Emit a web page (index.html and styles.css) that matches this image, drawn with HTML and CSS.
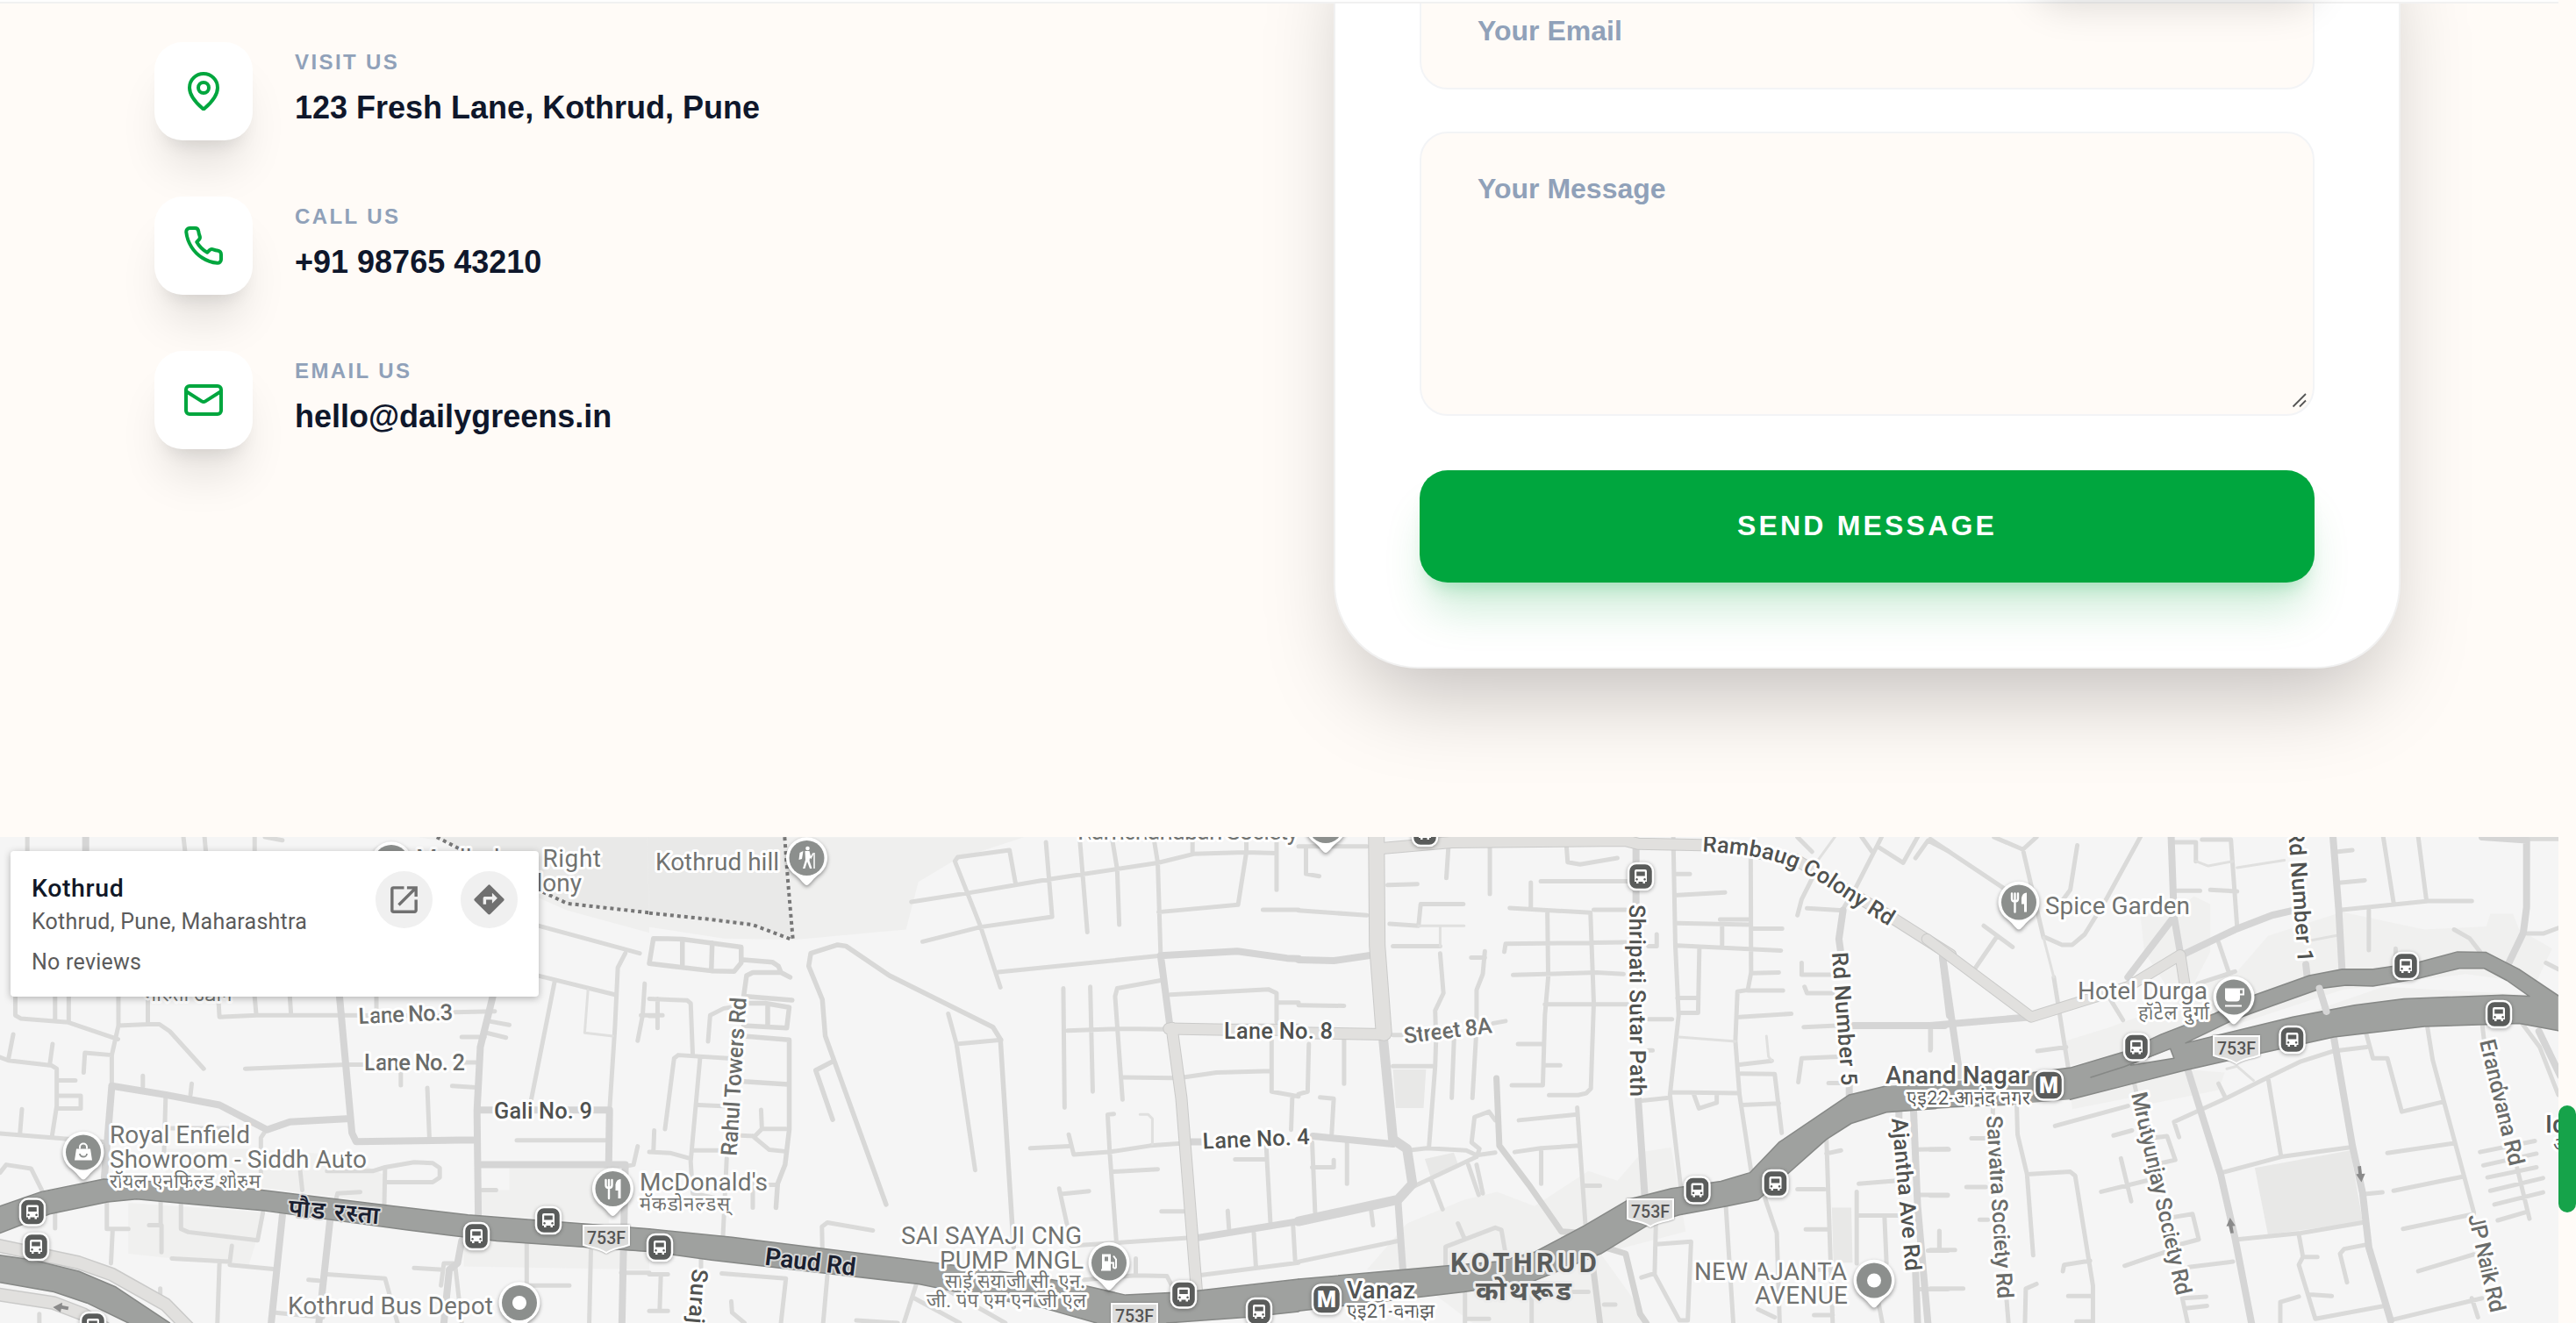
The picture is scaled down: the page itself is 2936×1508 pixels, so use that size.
FILE: index.html
```html
<!DOCTYPE html>
<html lang="en">
<head>
<meta charset="utf-8">
<title>Daily Greens – Contact</title>
<link rel="stylesheet" href="styles.css">
</head>
<body>
<div class="page">
<header class="topbar"><span class="topbar-cta"></span></header>
<div class="scrollthumb"></div>

<section class="contact">
  <ul class="info">
    <li class="info-item">
      <span class="info-icon"><svg viewBox="0 0 24 24"><path d="M20 10c0 4.993-5.539 10.193-7.399 11.799a1 1 0 0 1-1.202 0C9.539 20.193 4 14.993 4 10a8 8 0 0 1 16 0"/><circle cx="12" cy="10" r="3"/></svg></span>
      <div class="info-text"><p class="info-label">VISIT US</p><p class="info-value">123 Fresh Lane, Kothrud, Pune</p></div>
    </li>
    <li class="info-item">
      <span class="info-icon"><svg viewBox="0 0 24 24"><path d="M22 16.92v3a2 2 0 0 1-2.18 2 19.79 19.79 0 0 1-8.63-3.07 19.5 19.5 0 0 1-6-6 19.79 19.79 0 0 1-3.07-8.67A2 2 0 0 1 4.11 2h3a2 2 0 0 1 2 1.72 12.84 12.84 0 0 0 .7 2.81 2 2 0 0 1-.45 2.11L8.09 9.91a16 16 0 0 0 6 6l1.27-1.27a2 2 0 0 1 2.11-.45 12.84 12.84 0 0 0 2.81.7A2 2 0 0 1 22 16.92z"/></svg></span>
      <div class="info-text"><p class="info-label">CALL US</p><p class="info-value">+91 98765 43210</p></div>
    </li>
    <li class="info-item">
      <span class="info-icon"><svg viewBox="0 0 24 24"><rect x="2" y="4" width="20" height="16" rx="2"/><path d="m22 7-8.97 5.7a1.94 1.94 0 0 1-2.06 0L2 7"/></svg></span>
      <div class="info-text"><p class="info-label">EMAIL US</p><p class="info-value">hello@dailygreens.in</p></div>
    </li>
  </ul>
  <form class="card">
    <label class="field">Your Email</label>
    <label class="field field-area">Your Message<svg class="grip" viewBox="0 0 18 18"><path d="M1.5 16.5 16 2M9 16.5l7-7"/></svg></label>
    <button class="send" type="button">SEND MESSAGE</button>
  </form>
</section>

<section class="map">
<svg class="map-canvas" viewBox="0 954 2916 554">
<defs>
  <g id="bus"><rect class="badge" x="-14" y="-15" width="28" height="30" rx="9"/><path fill="#fff" fill-rule="evenodd" d="M-5-8H5q2 0 2 2V6H5V8H2.500V6H-2.500V8H-5V6H-7V-6q0-2 2-2zM-4.800-5.500V-.5H4.800V-5.500zM-4.500 2a1.300 1.300 0 1 0 .1 0zM4.500 2a1.300 1.300 0 1 0 .1 0z"/></g>
  <g id="metro"><rect class="badge" x="-16" y="-16.500" width="32" height="33" rx="10"/><text class="metro-m" x="0" y="9">M</text></g>
  <g id="pin"><path class="pin-edge" d="M0 31C-3 31-6 25-12 20A23.500 23.500 0 1 1 12 20C6 25 3 31 0 31z"/><circle class="pin-fill" r="20"/></g>
  <g id="dot"><use href="#pin"/><circle r="8" fill="#fff"/></g>
  <g id="food"><use href="#pin"/><path fill="none" stroke="#fff" stroke-width="2.400" stroke-linecap="round" d="M-8-10v6q0 3 3.500 3t3.500-3v-6M-4.500-10V11"/><path fill="#fff" d="M3 2V-5q1-6 6-6V11H6V2z"/></g>
  <g id="shield"><path class="shield" d="M-26-14H26V8L20 10Q8 12 0 17-8 12-20 10L-26 8z"/><text class="shield-no" x="0" y="7">753F</text></g>
</defs>

<!-- western quarter -->
<g transform="translate(0 940) scale(.47194 .36224)">
  <path class="park" d="M1010 39H1568V340L1370 270 1300 230V100z"/>
  <path class="park2" d="M1055 39 1130 90 1300 205 1370 248 1568 275V39z"/>
  <path class="urban" d="M400 1020H600L830 1040 925 1100V1190L620 1140 400 1110zM1230 1080H1470V1255L1160 1225 1150 1150H1230zM310 1190 640 1220 600 1390 310 1350zM1120 1310H1568V1400L1120 1390z"/>
  <path class="r5" d="M66 39V85M443 39l4 45M494 39l3 45M615 39V85M640 39l42 10M37 541V600L50 610 165 622 285 675M133 541V615M166 541V622M286 541V632L270 725V820M286 632 357 628H385L410 650 492 768M357 541V628M527 541 530 605 620 600H820M615 541 619 600M700 541 703 600M820 600 1060 601M1098 590 1195 587M909 541V580M32 660 20 740M0 732 20 742 125 758 137 768V885L125 985M127 690 120 757M202 780 205 718 270 725M137 805H182M137 853H195V893H137M345 790V825M463 815 460 850M53 895 48 975M0 972 250 998M0 1095 15 1070 75 1082 103 1155M592 768 835 755H880M1120 748H1150M968 780V820M1032 828 1037 985M1092 822 1150 827M1115 668H1170M1180 618 1230 630M1175 655 1222 670M1248 993H1465M400 860 395 1080M643 960 630 985V1100M400 955H560M790 1090H900L930 1078 1000 1062 1045 1065 1062 1080V1110L1045 1125H930M930 1078 928 1200M808 1200 815 1160 870 1156M725 1090 730 1150M1165 1150H1198M133 1220V1270M258 1190V1272H310M272 1275 268 1380M388 1185V1260H360M390 1260V1345M437 1190V1272L455 1282 622 1308 635 1220M415 1365 555 1375 560 1325M555 1385 660 1398M530 1380 525 1568M745 1432 770 1435M790 1415 930 1428 960 1568M1000 1395 1070 1400M1065 1450 1072 1380H1095M1100 1395 1115 1568M1272 1310V1450H1375M1427 1340 1423 1568M1500 1410H1568M95 1540V1568M387 1460V1490M660 1535 780 1550M1300 318 1545 405M1300 475 1485 535M1510 405 1492 450 1485 640 1472 900M1340 490 1283 865M1557 500 1552 600 1540 680M1548 600H1600M1540 1012 1530 1070 1510 1075"/>
  <path class="r3" d="M1420 520 1412 655 1480 665"/>
  <path class="r8" d="M207 39V85M270 822 400 850 530 882 645 960 700 935 845 925M270 822 252 1110M820 541 850 970 860 997 1145 992M1190 541 1160 700 1152 900 1155 1225M1155 1070H1470L1472 900M1160 898H1472M1470 1070H1510L1502 1568M682 1230 655 1568M797 1245 770 1568M1115 1310 1105 1380 1085 1400 1072 1568"/>
  <path class="dots" d="M1055 39 1130 90 1300 205 1370 248 1568 277"/>
  <path class="big-c" style="--w:16px" d="M-20 1320 190 1378 270 1415 400 1510 460 1590M-20 1475 130 1505 200 1540 260 1590"/>
  <path class="big" style="--w:13px" d="M-20 1320 190 1378 270 1415 400 1510 460 1590M-20 1475 130 1505 200 1540 260 1590"/>
  <path class="hw" d="M0 1200 100 1155 250 1115 400 1125 620 1148 950 1200 1130 1228 1350 1250 1572 1272V1345L1200 1310 980 1275 640 1215 330 1178 260 1187 120 1225 0 1285zM0 1355 80 1370 190 1405 280 1455 410 1568H310L210 1505 130 1470 0 1440z"/>
  <path class="hw-edge" d="M0 1200 100 1155 250 1115 400 1125 620 1148 950 1200 1130 1228 1350 1250 1568 1272M1568 1343 1200 1310 980 1275 640 1215 330 1178 260 1187 120 1225 0 1285M0 1355 80 1370 190 1405 280 1455 410 1568M310 1568 210 1505 130 1470 0 1440"/>
  <path fill="#8a8a8a" d="m128 1518 22-14v9l16 4-2 10-16-4-2 11z"/>
</g>

<!-- hill and towers -->
<g transform="translate(740 940) scale(.47194 .36224)">
  <path class="park" d="M-5 39H905L740 110 650 180 620 330 350 362 180 358 0 322z"/>
  <path class="park2" d="M-5 39H327L347 362 250 315 0 278z"/>
  <path class="r5" d="M633 243 770 215 965 172 1228 120 1315 92 1440 87 1515 90M885 188 870 80 745 102 738 115 800 320 848 512M660 368 800 322 973 290 958 55M1040 50 1058 338M1118 45 1130 140 1135 315M1218 39 1228 120 1235 410M1312 39V92M1442 39V87L1422 252 1230 275M1515 39V205M1482 268H1568M843 464 1235 412M1235 490 1130 515 1125 540 1143 865M1000 515 1003 890M1065 510 1071 840M1010 648 1135 642 1255 644M1258 535 1495 518 1515 530V620M1515 560H1568M1145 795 1265 797M1290 795 1370 780 1503 775M1503 680V840L1568 855M1553 855 1550 960M1490 1010 1500 1250M1415 1053H1490M920 1018 1013 1012M1013 975 1025 1038 1110 1030 1210 1010 1285 1003M1122 910 1107 912 1112 1030 1128 1310M1120 1092 1228 1084M1062 1153 995 1162M990 1145 1020 1325 1300 1300M1237 1217H1300M1397 1215 1400 1270M1460 1285 1465 1390M1555 1265 1560 1375M1335 1417 1568 1378M1175 1365V1418L1050 1432M1175 1418 1250 1420 1262 1450M722 595 742 690 787 1087M742 690 850 677M0 548 92 553 100 562 105 725M0 602H20M20 548V640M142 682 147 600 180 578 210 572M38 958 60 735 70 725 190 735M123 730 100 1060 105 1160 180 1180M118 882 190 886M270 897 272 957 255 980 220 978M272 957H330M250 980 290 1023 328 1028M105 1025H180M12 962 10 1030M0 1030 50 1033 98 1050M187 1050 178 1295M250 1130V1205M285 1133H310M418 1335 417 1265 430 1252 540 1277M175 1412 330 1428 318 1568M430 1420 420 1568M0 1415H45M28 1415 25 1530M0 1530H45M125 1365V1400M645 1445 615 1568M640 1490 750 1568M700 1450 860 1568M500 1560 600 1568M198 1500 200 1535 230 1568"/>
  <path class="r3" d="M1185 912H1205L1215 925V1005"/>
  <path class="r6" d="M228 425 298 433 312 445 318 465 340 480M318 465H250L235 475 228 540 345 552M228 562H280L338 575 332 640 228 632M286 565V635M228 665 338 677V960L328 1070 310 1130 306 1205M228 808 335 817M0 437 10 358 80 360 222 385V435L205 462 150 460 0 437M80 360V445M152 372 150 455M572 1195 425 665 418 550 385 445 390 405 455 378 475 382 580 475 830 637 848 675 880 1330M443 745 402 773 443 928"/>
  <path class="r8" d="M1235 412 1420 398 1540 420 1568 422M1235 412 1258 640M1305 998H1335M1325 1300 1568 1248"/>
  <path class="big-c" style="--w:14px" d="M1255 642 1400 645H1568M1262 640 1285 860 1322 1465"/>
  <path class="big" style="--w:12px" d="M1255 642 1400 645H1568M1262 640 1285 860 1322 1465"/>
  <path class="dots" d="M0 278 140 297 250 315 345 362M327 39 335 180 347 362"/>
  <path class="hw" d="M0 1272 200 1298 700 1380 900 1415 1050 1450 1150 1480 1300 1470 1572 1430V1532L1440 1550 1250 1568H1080L950 1520 780 1480 650 1445 150 1370 0 1343z"/>
  <path class="hw-edge" d="M0 1272 200 1298 700 1380 900 1415 1050 1450 1150 1480 1300 1470 1568 1430M0 1343 150 1370 650 1445 780 1480 950 1520 1080 1568M1250 1568 1440 1550 1568 1532"/>
</g>

<!-- Kothrud centre -->
<g transform="translate(1480 940) scale(.47194 .36224)">
  <path class="urban" d="M165 1400 262 1255 400 1180 480 1155 570 1200 700 1090 770 1120 830 1030 900 1015 935 1280 730 1350 850 1568H420L250 1400z"/>
  <path class="block" d="M228 770H308L302 892H235zM305 1052 375 1032 388 1078 320 1112zM1288 1205H1335L1338 1378H1292z"/>
  <path class="r5" d="M18 70V155L50 162M0 68H165M362 70 357 168M462 68V218M215 190 287 187M398 250H295L290 315M220 312 290 318M342 382H228M0 270 165 285M342 405 350 530 330 585 332 680 330 760 315 1015M228 760H330M417 418H450M450 398 445 470 430 520V640L420 860M376 660 370 860M470 625 500 618M228 662H255M647 65 650 118 680 125 770 105M585 178H795M561 182V262M510 262 705 277 713 560 706 830 695 845 675 851H605M601 275 603 480 595 600 590 820H515M497 400 500 375 790 370M518 473 720 465 785 470M595 565H795M530 690H592M595 757H632M713 268H790M845 382H865V345M845 612H902M845 710H855M830 868 890 860M532 930 673 912M673 890 693 1260M522 1030 585 1018 678 1010M586 1020V1130M690 1136H728M905 39 910 380 918 600 897 850 923 1140M908 155H945M908 222 1030 213M915 310 1090 315M1018 298H1090M1023 320V380M915 380 1165 396M968 390 965 592H920M915 545H965M1092 105 1093 465 1085 520 1060 525 1055 680 1065 850 1093 1090M1093 327H1168M1093 467 1160 465M1085 522H1170M1065 605 1190 595M1143 743 1065 755M1068 783 1150 785 1167 970M900 842 1063 845M955 850 967 893 1010 875V848M1070 882 1160 877M1228 263 1315 270M1215 435V472H1285M1222 510 1228 530H1290M1220 637 1300 632M1207 810 1215 735 1300 730M1280 813H1330M1205 39 1240 85M1240 170 1215 235 1205 285M1360 39 1385 85M1408 39 1345 200 1315 265M1400 70 1460 120 1495 39M1490 105 1520 50 1568 82M0 568 110 570M25 690 22 840 0 848M110 670V815M52 858 85 862 80 975M33 1000 40 1220M33 1078H85V1055M117 1000V1130M175 1210 180 1260M0 1375 240 1310M265 1025 310 1018 405 1025 430 1040 475 1032M430 1045 275 1140M430 1070 445 1160M410 1070 435 1165M320 1115 348 1210M475 930 460 903 425 920 418 1000 437 1020 430 1045M385 1255 400 1300M355 1400V1328L475 1268 490 1275 500 1350M402 1470V1568M563 1440V1568M630 1470H700M738 1510H765M403 1555H460M863 1255 860 1415 920 1560H940L948 1312 863 1320M828 1425 860 1412M1032 1200 1050 1568M1125 1170 1155 1285 1162 1568M1205 1147H1270M1225 1273H1280M1275 990 1285 1380 1290 1568M1275 1035 1310 1025M1353 1130 1445 1120M1348 1155V1380M1350 1230H1450M1415 1230 1420 1380M1250 1400H1290M1495 1022 1568 1020M1500 1165H1568M1520 1340H1568M1548 1280V1340M1110 1525 1150 1550M1245 1543H1290M1400 1500 1410 1568M1500 1462H1568M1527 640V705"/>
  <path class="r3" d="M290 318H400M342 318V382M918 668 1055 682M1130 665 1135 730 1143 743M1295 39 1250 120"/>
  <path class="r7" d="M478 798 485 1010 560 1140 635 1280 690 1285M740 1330 790 1350 825 1540 840 1568M712 1400 728 1568"/>
  <path class="r8" d="M1485 890 1495 1200 1520 1568M1490 1400 1495 1568M1450 895V930M1340 632H1560M0 425 85 428 180 410M35 980 228 1005M240 1180 252 1400M815 70V250M820 860 836 1165M1315 270 1305 360 1310 405M1330 820V850M1555 415 1572 600"/>
  <path class="r10" d="M205 680 228 990 262 1020 275 1130 240 1180 0 1248"/>
  <path class="big-c" style="--w:14px" d="M0 655 207 660M195 75 370 55 790 50 820 60 1000 65 1200 110 1430 290 1575 410"/>
  <path class="big-c" style="--w:19px" d="M188 34 190 380 206 655"/>
  <path class="big" style="--w:12px" d="M0 655 207 660M195 75 370 55 790 50 820 60 1000 65 1200 110 1430 290 1575 410"/>
  <path class="big" style="--w:17px" d="M188 34 190 380 206 655"/>
  <path class="hw" d="M0 1430 360 1388 480 1375 570 1345 690 1262 800 1178 900 1145 1020 1122 1090 1095 1160 1000 1330 850 1420 822 1572 812V892L1420 905 1335 940 1275 990 1180 1100 1110 1180 1035 1200 920 1228 850 1255 730 1350 560 1440 400 1470 0 1530z"/>
  <path class="hw-edge" d="M0 1430 360 1388 480 1375 570 1345 690 1262 800 1178 900 1145 1020 1122 1090 1095 1160 1000 1330 850 1420 822M1540 893 1420 905 1335 940 1275 990 1180 1100 1110 1180 1035 1200 920 1228 850 1255 730 1350 560 1440 400 1470 0 1530"/>
</g>

<!-- eastern quarter -->
<g transform="translate(2200 940) scale(.46939 .36224)">
  <path class="urban" d="M510 280H590L640 225 680 250V400L640 500 740 470 820 350 1000 275 1200 330 1350 320 1360 280H1415L1430 330 1510 390 1470 500 1300 470 1000 520 600 690 330 760V680L430 640 600 560 520 400zM335 800 345 895 520 850 530 880 700 835 715 780 620 770zM900 600 1100 510 1450 535 1100 560z"/>
  <path class="block" d="M788 1080 1020 1025 1050 1250 820 1290z"/>
  <path class="r5" d="M0 45 190 210M155 39 225 78 258 39M225 78 245 190 275 355M357 65 340 205 320 240M510 39 425 240 375 345 345 378H320L280 355M130 318 200 385M163 350 110 450M300 480 335 765M435 545 468 615M260 712 330 700M590 55H645V115M660 47H730L745 320M600 208H655M680 205 745 210M700 370 725 465M650 500 740 462M990 85 1025 80M992 183 1055 175M1000 268 1210 240H1315M1100 39 1125 245M1185 39 1205 240M1065 270V395M1130 390V410M1272 330 1310 358 1335 400M1450 45H1525M1450 342H1490L1525 325M1495 435 1525 455M1340 625 1345 680M1437 625 1480 700 1525 850M303 948 480 885M210 885 212 975 235 1100 250 1355M235 1100 340 1092 352 1105 395 1450V1568M445 978 490 962M604 983 592 935 720 860 820 795 900 745 980 712 1060 700M700 815 715 855M820 795 852 1045M708 1095 852 1045 1020 1015M1057 650 1075 735H1110L1145 903 1245 872M1207 635 1220 740 1320 1220M1110 1033 1270 1003M1125 1152 1295 1107M1055 1162 1098 1157M1148 1272 1320 1225M1185 1405 1320 1352M1335 1030 1468 995M1343 1072 1472 1035M1353 1110 1472 1078M1360 1152 1488 1112M1370 1195 1488 1157M1378 1245 1450 1218M1425 1080 1455 1240M745 1305 900 1285 1050 1252M895 1290 905 1360 895 1385 935 1555 1100 1515M905 1360H940M920 1478 975 1483M850 1568V1502L895 1485M1065 1320 1005 1335 995 1350 1012 1440M1115 1560 1340 1490M1315 1490 1330 1550M545 985 575 980 595 1055 560 1065M463 1050 488 1185M415 1155 525 1120M590 1235 637 1225 652 1305 580 1330M472 1388 570 1345M628 1392 735 1375M612 1490 625 1568M615 1490 670 1485M620 1522 672 1514M100 987H135M0 1022H45M88 1140H135M0 1167H42M120 1243H140M22 1278V1338M0 1338H60M0 1460H80M230 1568 232 1460 258 1445M322 1405 325 1385 388 1372M335 1483H390M355 1563H390M185 1490 190 1568M152 885V910M495 812 500 840M0 645V710"/>
  <path class="r3" d="M275 355 300 480M645 115 675 130 735 115M745 135 860 112M920 365 990 348M720 768 745 760 785 805"/>
  <path class="r8" d="M0 632 245 605M30 415 72 790M585 39 592 290 608 410M592 290 480 480M620 405 740 330 830 285 880 270M978 39 992 270 1000 460M1340 39 1448 48V260L1440 340 1405 435M912 440 915 475M625 770 705 1100 740 1300 780 1568M980 670 1025 1010 1050 1160 1065 1330 1118 1560M1478 650 1530 790"/>
  <path class="big-c" style="--w:13px" d="M-8 360 245 605 480 510 607 410 620 520"/>
  <path class="big" style="--w:11px" d="M-8 360 245 605 480 510 607 410 620 520"/>
  <path class="hw" fill-rule="evenodd" d="M-40 815 130 800 250 780 340 765 470 715 560 660 690 595 790 535 920 475 1000 455H1075L1180 435 1280 400 1350 402 1430 455 1525 538V648L1430 625 1200 635 980 668 800 720 620 772 500 812 340 865 200 880-40 893zM620 687 740 612 830 570 950 515 1010 505 1075 508 1180 485 1285 452H1345L1400 490 1455 540 1390 536 1150 548 1030 568 880 605zM487 757 583 705 592 735z"/>
  <path class="hw-edge" d="M250 780 340 765 470 715 560 660 690 595 790 535 920 475 1000 455H1075L1180 435 1280 400 1350 402 1430 455 1525 538M1525 648 1430 625 1200 635 980 668 800 720 620 772 500 812 340 865M200 881-40 893M620 687 740 612 830 570 950 515 1010 505 1075 508 1180 485 1285 452H1345L1400 490 1455 540 1390 536 1150 548 1030 568 880 605zM390 795 470 762 583 705 592 735 487 757"/>
  <path class="r8" d="M945 515 962 588"/>
  <path fill="#8a8a8a" d="m1038 1075 8-1 2 25 8-1-9 27-13-25 6-1zM729 1286l8-1-3-22 7-1-13-25-9 27 6-1z"/>
</g>

<!-- road names -->
<g class="road">
  <text class="lt" textLength="108" transform="translate(408.700 1167) rotate(-2.500)">Lane No.3</text>
  <text class="lt" textLength="115" transform="translate(415 1220)">Lane No. 2</text>
  <text textLength="112" x="563" y="1275">Gali No. 9</text>
  <text textLength="124" x="1395" y="1184">Lane No. 8</text>
  <text textLength="122" transform="translate(1371 1309.500) rotate(-2.500)">Lane No. 4</text>
  <text class="lt" textLength="101" transform="translate(1601 1189.500) rotate(-7)">Street 8A</text>
  <text class="dark" textLength="104" transform="translate(328 1386) rotate(5)">पौड रस्ता</text>
  <text class="dark" textLength="104" transform="translate(871 1441.500) rotate(7)">Paud Rd</text>
  <text class="lt" textLength="181" transform="translate(839.500 1318) rotate(-86.500)">Rahul Towers Rd</text>
  <text textLength="62" transform="translate(789 1446) rotate(94)">Suraj</text>
  <text textLength="219" transform="translate(1857 1031) rotate(89.700)">Shripati Sutar Path</text>
  <text textLength="152" transform="translate(2088 1086) rotate(85.800)">Rd Number 5</text>
  <text textLength="152" transform="translate(2608 945.500) rotate(85.800)">Rd Number 1</text>
  <text textLength="175" transform="translate(2156 1275) rotate(84.700)">Ajantha Ave Rd</text>
  <text class="lt" textLength="236" transform="translate(2429 1247) rotate(77.300)">Mrutyunjay Society Rd</text>
  <text class="lt" textLength="209" transform="translate(2264 1272) rotate(86.500)">Sarvatra Society Rd</text>
  <text class="lt" textLength="147" transform="translate(2826 1187) rotate(76.500)">Erandvana Rd</text>
  <text class="lt" textLength="114" transform="translate(2813 1386) rotate(77)">JP Naik Rd</text>
  <path id="rambaug" fill="none" d="M1940 970.500C1990 973 2020 978 2050 992S2110 1031 2160 1060"/>
  <text textLength="234"><textPath href="#rambaug">Rambaug Colony Rd</textPath></text>
</g>

<!-- places -->
<g class="poi">
  <use href="#pin" x="446" y="983"/>
  <text x="474" y="988" textLength="211">Madhuban Right</text>
  <text class="end" x="663" y="1015.500">Colony</text>
  <text class="hi" x="165" y="1141">मारुती उद्यान</text>
  <text class="end" x="888" y="991.500" textLength="141">Kothrud hill</text>
  <text x="125" y="1302.500" textLength="160">Royal Enfield</text>
  <text x="125" y="1330.500" textLength="293">Showroom - Siddh Auto</text>
  <text class="hi" x="125" y="1354" textLength="172">रॉयल एनफिल्ड शोरुम</text>
  <text x="328" y="1498" textLength="234">Kothrud Bus Depot</text>
  <text x="729" y="1357" textLength="146">McDonald's</text>
  <text class="hi" x="729" y="1379.500" textLength="103">मॅकडोनल्डस्</text>
  <text x="1027" y="1417.500" textLength="206">SAI SAYAJI CNG</text>
  <text x="1071" y="1445.500" textLength="164">PUMP MNGL</text>
  <text class="hi" x="1077" y="1468" textLength="160">साई सयाजी सी. एन.</text>
  <text class="hi" x="1056" y="1490" textLength="182">जी. पंप एम एन जी एल</text>
  <text x="1228" y="957" textLength="252">Ramchandban Society</text>
  <text x="1931" y="1458.500" textLength="174">NEW AJANTA</text>
  <text x="2000" y="1486" textLength="106">AVENUE</text>
  <text x="2331" y="1041.500" textLength="165">Spice Garden</text>
  <text x="2368" y="1139" textLength="148">Hotel Durga</text>
  <text class="hi" x="2437" y="1161.500" textLength="81">हॉटेल दुर्गा</text>
  <text class="station" x="2149" y="1235" textLength="164">Anand Nagar</text>
  <text class="hi dk" x="2173" y="1258.500" textLength="141">एइ22-आनंद नगर</text>
  <text class="station" x="1535" y="1479.500" textLength="78">Vanaz</text>
  <text class="hi dk" x="1535" y="1501.500" textLength="100">एइ21-वनाझ</text>
  <text class="station" x="2901" y="1290.500">Ideal</text>
  <text class="hi dk" x="2910" y="1312">आय</text>
  <text class="town" x="1653" y="1450" textLength="167">KOTHRUD</text>
  <text class="town" x="1682" y="1482" textLength="109">कोथरूड</text>
</g>

<use href="#shield" x="691" y="1411"/><use href="#shield" x="1293" y="1500"/><use href="#shield" x="1881" y="1381"/><use href="#shield" x="2549" y="1195"/>
<use href="#bus" x="37" y="1381.500"/><use href="#bus" x="41" y="1421"/><use href="#bus" x="543" y="1409"/><use href="#bus" x="625" y="1391"/><use href="#bus" x="106" y="1511"/>
<use href="#bus" x="752" y="1422"/><use href="#bus" x="1349" y="1475.500"/><use href="#bus" x="1435" y="1495"/><use href="#bus" x="1870" y="999"/><use href="#bus" x="1934.500" y="1356.500"/>
<use href="#bus" x="2023.500" y="1349"/><use href="#bus" x="1624" y="949"/><use href="#bus" x="2742" y="1101"/><use href="#bus" x="2435" y="1193.500"/><use href="#bus" x="2848" y="1156"/><use href="#bus" x="2612.500" y="1185"/>
<use href="#metro" x="2335" y="1237"/><use href="#metro" x="1512" y="1481"/>
<use href="#dot" x="592" y="1485"/><use href="#dot" x="2136" y="1459.500"/><use href="#dot" x="1511" y="941"/>
<use href="#food" x="698.500" y="1355"/><use href="#food" x="2301" y="1028.500"/>
<g transform="translate(95 1313.500)"><use href="#pin"/><path fill="#fff" d="M-8-4H8l2 13H-10z"/><path fill="none" stroke="#fff" stroke-width="2" d="M-4-4v-2a4 4 0 0 1 8 0v2"/><path fill="none" stroke="#8c8f8d" stroke-width="1.800" d="M-4 1.500a4 3.500 0 0 0 8 0"/></g>
<g transform="translate(919.500 978)"><use href="#pin"/><circle cx="1" cy="-11" r="2.300" fill="#fff"/><path fill="#fff" d="M-2-8H3L4.500-2 7-6 8-5 5 1 3.500 0 3 3 6 12H3.500L.5 4-2 12H-4.500L-1.500 2z M-8-6-4-8-5.500 1-9 2z"/><path stroke="#fff" stroke-width="1.500" d="M8.500-6V12"/></g>
<g transform="translate(1264 1439.500)"><use href="#pin"/><path fill="#fff" fill-rule="evenodd" d="M-8-10H2V9H-9V7H-8zM-5-7V-2H-1V-7z"/><path fill="none" stroke="#fff" stroke-width="2" d="M2 0H5V5q2 2 3 0V-4L5-8"/></g>
<g transform="translate(2546 1136.500)"><use href="#pin"/><path fill="#fff" fill-rule="evenodd" d="M-10-10H12V-2H7V1q0 4-4 4H-6q-4 0-4-4zM7-8V-4H10V-8zM-10 9H9v2H-10z"/></g>
</svg>

<div class="place">
  <div class="place-text">
    <p class="place-name">Kothrud</p>
    <p class="place-line">Kothrud, Pune, Maharashtra</p>
    <p class="place-line place-reviews">No reviews</p>
  </div>
  <div class="place-actions">
    <span class="round"><svg viewBox="0 0 24 24"><path d="M19 19H5V5h7V3H5a2 2 0 0 0-2 2v14a2 2 0 0 0 2 2h14c1.100 0 2-.9 2-2v-7h-2zM14 3v2h3.590l-9.830 9.830 1.410 1.410L19 6.410V10h2V3z"/></svg></span>
    <span class="round"><svg viewBox="0 0 24 24"><path d="m21.710 11.290-9-9a1 1 0 0 0-1.410 0l-9 9a1 1 0 0 0 0 1.410l9 9c.39.39 1.020.39 1.410 0l9-9a1 1 0 0 0 0-1.410M14 14.500V12h-4v3H8v-4c0-.55.45-1 1-1h5V7.500l3.500 3.500z"/></svg></span>
  </div>
</div>
</section>
</div>
</body>
</html>
```
FILE: styles.css
```css
* { box-sizing: border-box; }
body { margin: 0; background: #fffbf7; font-family: "Liberation Sans", Arial, sans-serif; }
p, ul { margin: 0; padding: 0; list-style: none; }

.page { position: relative; width: 2936px; height: 1508px; overflow: hidden; }

.topbar { position: absolute; z-index: 3; top: 0; left: 0; width: 2916px; height: 4px; background: #fefefe; border-bottom: 2px solid #f1f1f1; }
.topbar-cta { position: absolute; top: -104px; left: 2310px; width: 340px; height: 88px; border-radius: 44px; box-shadow: 0 32px 44px -8px rgba(0, 0, 0, .13); }
.scrollthumb { position: absolute; z-index: 4; right: 0; top: 1260px; width: 20px; height: 122px; border-radius: 10px; background: #16a34a; }

.contact { display: flex; justify-content: space-between; align-items: flex-end; width: 2916px; height: 954px; padding: 0 180px 192px 176px; }

.info { align-self: flex-start; padding-top: 48px; display: flex; flex-direction: column; gap: 64px; }
.info-item { display: flex; gap: 48px; height: 112px; }
.info-icon { display: flex; align-items: center; justify-content: center; width: 112px; height: 112px; border-radius: 32px; background: #fff; box-shadow: 0 40px 50px -10px rgba(0, 0, 0, .1), 0 16px 20px -12px rgba(0, 0, 0, .1); }
.info-icon svg { width: 48px; height: 48px; fill: none; stroke: #00a63e; stroke-width: 2; stroke-linecap: round; stroke-linejoin: round; }
.info-text { padding-top: 7px; }
.info-label { font-size: 24px; line-height: 32px; font-weight: 700; letter-spacing: 2.4px; color: #90a1b9; margin-bottom: 8px; }
.info-value { font-size: 36px; line-height: 56px; font-weight: 700; color: #0f172b; }

.card { display: flex; flex-direction: column; width: 1216px; padding: 96px; border: 2px solid #f1f1f1; border-radius: 96px; background: #fff; box-shadow: 0 50px 100px -24px rgba(0, 0, 0, .25); }
.field { position: relative; flex: none; height: 136px; padding: 49px 64px; border: 2px solid #f3f4f6; border-radius: 32px; background: #fffbf7; font-size: 32px; line-height: 36px; font-weight: 700; color: #90a1b9; }
.field-area { height: 324px; margin-top: 48px; padding-top: 45px; }
.grip { position: absolute; right: 6px; bottom: 7px; width: 18px; height: 18px; fill: none; stroke: #555; stroke-width: 1.8; }
.send { height: 128px; margin-top: 62px; padding: 0 0 2px; border: 0; border-radius: 32px; background: #00a63e; color: #fff; font: 700 32px/48px "Liberation Sans", Arial, sans-serif; letter-spacing: 3.2px; box-shadow: 0 40px 50px -10px rgba(0, 166, 62, .2), 0 16px 20px -12px rgba(0, 166, 62, .25); }

.map { position: relative; width: 2916px; height: 554px; overflow: hidden; background: #f5f5f5; }
.map-canvas { display: block; width: 2916px; height: 554px; }
.map-canvas g > path { vector-effect: non-scaling-stroke; }
.r3, .r5, .r6, .r7, .r8, .r10, .big, .big-c, .dots, .hw-edge { fill: none; stroke-linecap: round; stroke-linejoin: round; }
.r3 { stroke: #e0e0df; stroke-width: 3px; }
.r5 { stroke: #dadad9; stroke-width: 5px; }
.r6 { stroke: #d8d8d7; stroke-width: 5.5px; }
.r7 { stroke: #d3d3d2; stroke-width: 7px; }
.r8 { stroke: #d5d5d5; stroke-width: 8px; }
.r10 { stroke: #d5d5d5; stroke-width: 11px; }
.big { stroke: #e1e0de; stroke-width: var(--w); }
.big-c { stroke: #cacac9; stroke-width: var(--w); }
.dots { stroke: #777; stroke-width: 4px; stroke-linecap: butt; stroke-dasharray: 4 4; }
.hw { fill: #9fa19f; }
.hw-edge { stroke: #868886; stroke-width: 1.5px; }
.park { fill: #efefee; }
.park2 { fill: #e9e9e8; }
.urban { fill: #f0f0ef; }
.block { fill: #e8e8e7; }

.map-canvas text { paint-order: stroke; stroke: #fff; stroke-width: 6px; stroke-linejoin: round; font-family: Roboto, "Noto Sans", sans-serif; }
.road text { font-size: 25.5px; font-weight: 500; fill: #505250; }
.road .lt { fill: #6a6c6a; }
.road .dark { font-size: 28px; font-weight: 600; fill: #1a2030; stroke: #d5d6d5; stroke-width: 4px; }
.poi text { font-size: 28px; fill: #717371; }
.poi .end { text-anchor: end; }
.poi .hi { font-size: 22px; }
.poi .dk { fill: #5c5e5d; }
.poi .station { font-weight: 500; fill: #535554; }
.poi .town { font-size: 31px; font-weight: 700; fill: #5a5c5b; stroke: #ececec; }
.badge { fill: #5a5c5b; stroke: #fff; stroke-width: 2.5px; filter: drop-shadow(0 1px 2px rgba(0, 0, 0, .35)); }
.pin-edge { fill: #fff; filter: drop-shadow(0 2px 2px rgba(0, 0, 0, .4)); }
.pin-fill { fill: #8c8f8d; }
.shield { fill: #dcdcdb; stroke: #fff; stroke-width: 2px; filter: drop-shadow(0 0 1px #777); }
.map-canvas .shield-no { font-size: 19.5px; font-weight: 500; fill: #555; stroke: none; text-anchor: middle; }
.map-canvas .metro-m { font-size: 25px; font-weight: 900; fill: #fff; stroke: none; text-anchor: middle; }

.place { position: absolute; top: 16px; left: 12px; width: 602px; height: 166px; display: flex; justify-content: space-between; padding: 25px 24px 0 24px; border-radius: 4px; background: #fff; box-shadow: 0 2px 8px rgba(0, 0, 0, .28); font-family: Roboto, sans-serif; }
.place-name { font-size: 28.5px; line-height: 36px; font-weight: 500; letter-spacing: .6px; color: #111827; }
.place-line { margin-top: 4px; font-size: 25px; line-height: 32px; letter-spacing: .25px; color: #5b5b5b; }
.place-reviews { margin-top: 14px; }
.place-actions { display: flex; gap: 32px; margin-top: -2px; }
.round { display: flex; align-items: center; justify-content: center; width: 65px; height: 65px; border-radius: 50%; background: #f0f0f0; }
.round svg { width: 41px; height: 41px; fill: #707070; }
```
